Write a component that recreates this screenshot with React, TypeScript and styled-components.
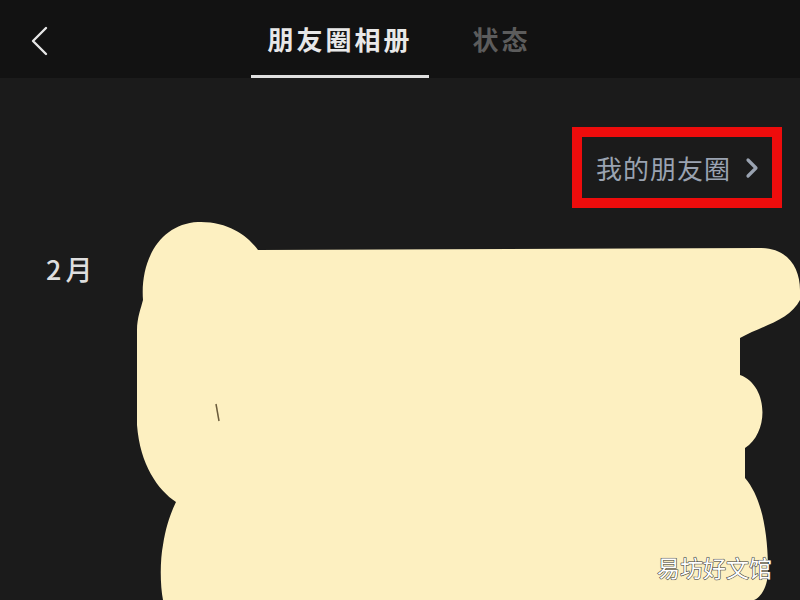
import React from "react";
import styled, { createGlobalStyle } from "styled-components";

const GlobalStyle = createGlobalStyle`
  html, body {
    margin: 0;
    padding: 0;
    background: #1b1b1b;
  }
  body {
    font-family: "Noto Sans CJK SC", "Noto Sans", sans-serif;
  }
`;

const tabs = [
  { label: "朋友圈相册", active: true },
  { label: "状态", active: false },
];

const App: React.FC = () => {
  return (
    <>
      <GlobalStyle />
      <Page>
        <Header>
          <BackButton aria-label="back">
            <svg width="24" height="32" viewBox="0 0 24 32">
              <path
                d="M20 3 L7 16 L20 29"
                fill="none"
                stroke="#e6e6e6"
                strokeWidth="2.4"
                strokeLinecap="round"
                strokeLinejoin="round"
              />
            </svg>
          </BackButton>
          <Tabs>
            {tabs.map((t) => (
              <Tab key={t.label} $active={t.active}>
                {t.label}
              </Tab>
            ))}
          </Tabs>
        </Header>

        <Content>
          <LinkRow>
            <MomentsLink>
              <span>我的朋友圈</span>
              <svg width="16" height="22" viewBox="0 0 16 22">
                <path
                  d="M4 3 L12 11 L4 19"
                  fill="none"
                  stroke="#9aa3b1"
                  strokeWidth="3.2"
                  strokeLinecap="round"
                  strokeLinejoin="round"
                />
              </svg>
            </MomentsLink>
          </LinkRow>
          <MonthRow>
            <Month>2月</Month>
          </MonthRow>

          {/* 涂抹遮挡 */}
          <Scribble viewBox="0 78 800 522" preserveAspectRatio="none">
            <path
              fill="#fdf0c1"
              d="M143 300
                 C140 260 160 224 198 222
                 C228 221 248 236 258 250
                 L760 248
                 C788 248 800 268 800 290
                 L800 300
                 C790 320 762 326 740 338
                 L740 375
                 C768 385 770 432 745 448
                 L745 478
                 C764 500 768 540 768 570
                 C768 588 760 598 754 600
                 L163 600
                 C160 585 160 560 163 545
                 C166 525 172 510 176 502
                 C158 490 140 465 137 425
                 L137 330
                 C137 318 141 308 143 300 Z"
            />
            <path d="M216 404 L219 421" stroke="#6b5c3c" strokeWidth="1.5" />
          </Scribble>

          <Watermark>易坊好文馆</Watermark>
        </Content>
      </Page>
    </>
  );
};
export default App;

const Page = styled.div`
  width: 800px;
  height: 600px;
  display: flex;
  flex-direction: column;
  overflow: hidden;
  background: #1b1b1b;
`;

const Header = styled.div`
  height: 78px;
  background: #121212;
  display: flex;
  align-items: stretch;
  justify-content: center;
  position: relative;
`;

const BackButton = styled.button`
  position: absolute;
  left: 26px;
  top: 25px;
  background: none;
  border: none;
  padding: 0;
  cursor: pointer;
  display: flex;
`;

const Tabs = styled.div`
  display: flex;
  gap: 28px;
  margin-left: -2px;
`;

const Tab = styled.div<{ $active: boolean }>`
  padding: 0 16px;
  display: flex;
  align-items: center;
  padding-top: 2px;
  font-size: 26px;
  font-weight: 700;
  letter-spacing: 3px;
  color: ${(p) => (p.$active ? "#e8e8e8" : "#5c5c5c")};
  border-bottom: 3px solid ${(p) => (p.$active ? "#e0e0e0" : "transparent")};
`;

const Content = styled.div`
  flex: 1;
  position: relative;
  display: flex;
  flex-direction: column;
`;

const LinkRow = styled.div`
  display: flex;
  justify-content: flex-end;
  padding: 49px 18px 0 0;
`;

const MomentsLink = styled.div`
  box-sizing: border-box;
  width: 210px;
  height: 81px;
  border: 10px solid #ee0c0c;
  display: flex;
  align-items: center;
  gap: 13px;
  padding-left: 14px;
  font-size: 26px;
  letter-spacing: 1px;
  color: #9aa3b1;
  span {
    line-height: 1;
  }
`;

const MonthRow = styled.div`
  padding: 47px 0 0 46px;
`;

const Month = styled.div`
  font-size: 27px;
  font-weight: 500;
  color: #dedede;
  letter-spacing: 4px;
  line-height: 1;
`;

const Scribble = styled.svg`
  position: absolute;
  left: 0;
  top: 0;
  width: 800px;
  height: 522px;
`;

const Watermark = styled.div`
  position: absolute;
  right: 28px;
  bottom: 16px;
  font-size: 23px;
  color: #ffffff;
  -webkit-text-stroke: 1px #3a3a3a;
  paint-order: stroke fill;
  text-shadow: 0 0 1px #444;
`;
